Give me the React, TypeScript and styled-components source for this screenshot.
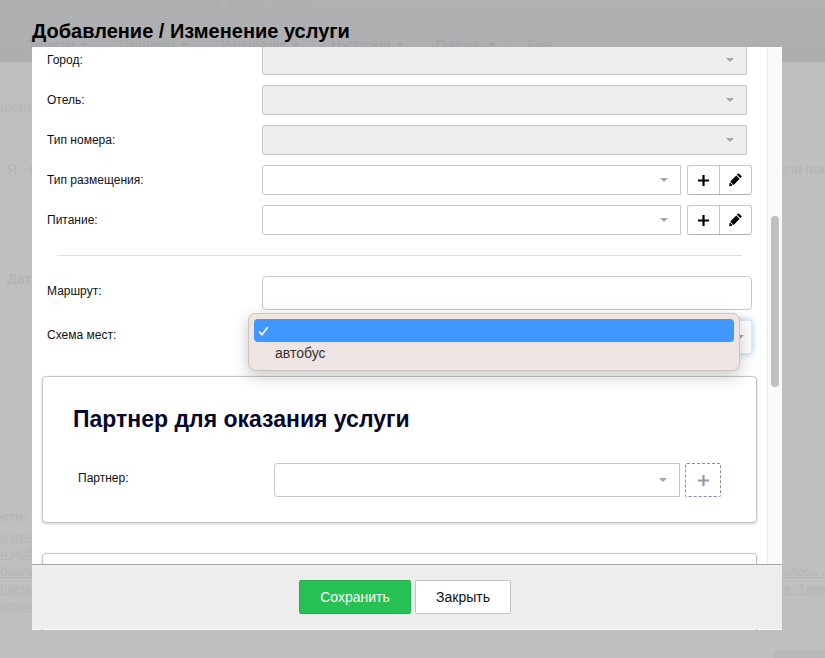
import React from "react";
import styled, { createGlobalStyle } from "styled-components";

const Global = createGlobalStyle`
  html, body { margin: 0; padding: 0; height: 100%; }
  body { font-family: "Liberation Sans", Arial, sans-serif; background: #bfbfbf; overflow: hidden; }
`;

const Page = styled.div`
  position: relative;
  width: 825px;
  height: 658px;
  overflow: hidden;
  background: #bfbfbf;
`;

/* ---- dimmed page behind the dialog ---- */
const TopBar = styled.div`
  height: 62px;
  background: linear-gradient(#b0b1b3, #adaeb0);
  box-sizing: border-box;
`;
const Tabs = styled.div`
  display: flex;
  gap: 7px;
  height: 12px;
  margin-bottom: 26px;
`;
const Tab = styled.div<{ $w: number }>`
  width: ${(p) => p.$w}px;
  background: #aeafb1;
  border-radius: 0 0 3px 3px;
`;
const Nav = styled.div`
  display: flex;
  gap: 31.5px;
  padding-left: 28px;
  font-size: 12px;
  color: #a3a4a6;
`;
const NavItem = styled.span`
  display: inline-flex;
  align-items: center;
  gap: 6px;
  white-space: nowrap;
  &::after {
    content: "";
    display: ${(p: { $plain?: boolean }) => (p.$plain ? "none" : "block")};
    border: 4px solid transparent;
    border-top: 4px solid #a3a4a6;
    border-bottom: 0;
  }
`;
const DimBand = styled.div<{ $h: number; $pl?: number; $pb?: number; $align?: string }>`
  height: ${(p) => p.$h}px;
  box-sizing: border-box;
  display: flex;
  align-items: ${(p) => p.$align ?? "center"};
  justify-content: space-between;
  padding-left: ${(p) => p.$pl ?? 7}px;
  padding-bottom: ${(p) => p.$pb ?? 0}px;
  border-bottom: 1px solid #bbbbbb;
  font-size: 14px;
  color: #b5b5b5;
  white-space: nowrap;
`;
const DimTail = styled.span`
  margin-right: -25px;
`;
const DimNotes = styled.div`
  margin-top: 160px;
  font-size: 13px;
  line-height: 17.2px;
  color: #b6b6b6;
  white-space: nowrap;
`;
const DimHead = styled.div`
  margin: 0 0 3px -6px;
  font-weight: 700;
`;
const DimLink = styled.div`
  display: flex;
  justify-content: space-between;
  text-decoration: underline;
`;
const DimLinkTail = styled.span<{ $over?: number }>`
  margin-right: -${(p) => p.$over ?? 0}px;
`;
const Corner = styled.div`
  position: absolute;
  right: 0;
  bottom: 0;
  width: 52px;
  height: 8px;
  background: #b9b9b9;
  border-radius: 8px 0 0 0;
`;

/* ---- dialog ---- */
const Dialog = styled.div`
  position: absolute;
  left: 32px;
  top: 18px;
  width: 750px;
`;
const DialogTitle = styled.h2`
  margin: 0;
  height: 29px;
  line-height: 27px;
  font-size: 20px;
  font-weight: 700;
  color: #000;
  white-space: nowrap;
`;
const DialogBody = styled.div`
  position: relative;
  height: 583px;
  background: #fff;
  overflow: hidden;
  display: flex;
`;
const Content = styled.div`
  width: 735px;
  flex: none;
  box-sizing: border-box;
  padding: 0 10px;
  margin-top: -2px;
`;
const Track = styled.div`
  position: relative;
  flex: none;
  width: 15px;
  background: #fafafa;
  border-left: 1px solid #e8e8e8;
  box-sizing: border-box;
`;
const Thumb = styled.div`
  position: absolute;
  left: 3px;
  top: 169px;
  width: 8px;
  height: 171px;
  border-radius: 4px;
  background: #c1c1c1;
`;
const Row = styled.div<{ $h?: number; $mb?: number }>`
  display: flex;
  align-items: center;
  height: ${(p) => p.$h ?? 30}px;
  margin-bottom: ${(p) => p.$mb ?? 10}px;
`;
const Label = styled.label<{ $w?: number; $pl?: number; $raise?: number }>`
  flex: none;
  width: ${(p) => p.$w ?? 220}px;
  padding-left: ${(p) => p.$pl ?? 5}px;
  padding-bottom: ${(p) => p.$raise ?? 0}px;
  box-sizing: border-box;
  font-size: 12px;
  color: #111;
  white-space: nowrap;
`;
const Select = styled.div<{ $w: number; $h?: number; $disabled?: boolean }>`
  position: relative;
  flex: none;
  width: ${(p) => p.$w}px;
  height: ${(p) => p.$h ?? 30}px;
  box-sizing: border-box;
  border: 1px solid #c8c8c8;
  border-radius: 3px 0 0 3px;
  background: ${(p) => (p.$disabled ? "#eeeeee" : "#fff")};
  &::after {
    content: "";
    position: absolute;
    right: 12px;
    top: 50%;
    margin-top: -2px;
    border: 4.5px solid transparent;
    border-top: 4px solid #a6a6a6;
    border-bottom: 0;
  }
`;
const FocusSelect = styled(Select)`
  border-color: #dbe8f5;
  box-shadow: 0 0 6px rgba(82, 168, 236, 0.6);
  border-radius: 3px;
  &::after {
    right: 7px;
  }
`;
const TextInput = styled.div`
  flex: none;
  width: 490px;
  height: 34px;
  box-sizing: border-box;
  border: 1px solid #c8c8c8;
  border-radius: 4px;
  background: #fff;
`;
const BtnGroup = styled.div`
  flex: none;
  display: flex;
  margin-left: 6px;
  height: 30px;
  box-sizing: border-box;
  border: 1px solid #c8c8c8;
  border-bottom-color: #b4b4b4;
  border-radius: 3px;
`;
const IconBtn = styled.div`
  width: 31px;
  padding-right: 1px;
  box-sizing: border-box;
  display: flex;
  align-items: center;
  justify-content: center;
  & + & {
    width: 32px;
    padding-right: 0;
    border-left: 1px solid #c8c8c8;
  }
`;
const Divider = styled.hr`
  margin: 20px 15px 20px 15px;
  border: 0;
  border-top: 1px solid #dedede;
`;
const Card = styled.section<{ $h: number; $mb?: number }>`
  width: 715px;
  height: ${(p) => p.$h}px;
  margin-bottom: ${(p) => p.$mb ?? 0}px;
  box-sizing: border-box;
  border: 1px solid #c6c6c6;
  border-radius: 4px;
  background: #fff;
  box-shadow: 0 1px 3px rgba(0, 0, 0, 0.2);
  padding: 29px 30px 0;
`;
const CardTitle = styled.h3`
  margin: 0 0 30px;
  font-size: 23px;
  line-height: 27px;
  font-weight: 700;
  color: #07072b;
  white-space: nowrap;
`;
const DashedBtn = styled.div`
  flex: none;
  margin-left: 5px;
  width: 36px;
  height: 34px;
  box-sizing: border-box;
  border: 1px dashed #8f88a8;
  border-radius: 2px;
  display: flex;
  align-items: center;
  justify-content: center;
`;

/* ---- native-style popup ---- */
const Popup = styled.div`
  position: absolute;
  left: 216px;
  top: 266px;
  width: 492px;
  height: 58px;
  box-sizing: border-box;
  padding: 5px;
  background: #eee5e3;
  border: 1px solid #cbc5c3;
  border-radius: 7px;
  box-shadow: 0 5px 16px rgba(0, 0, 0, 0.22);
  font-size: 14px;
  color: #333;
`;
const PopupActive = styled.div`
  height: 23px;
  border-radius: 4px;
  background: #3f97ff;
  display: flex;
  align-items: center;
  padding-left: 4px;
`;
const PopupItem = styled.div`
  height: 22px;
  line-height: 22px;
  padding-left: 21px;
`;

/* ---- footer ---- */
const Footer = styled.div`
  position: absolute;
  left: 0;
  right: 0;
  bottom: 1px;
  height: 65px;
  box-sizing: border-box;
  background: #ededed;
  border-top: 1px solid #a8a8a8;
  display: flex;
  justify-content: center;
  gap: 4px;
  padding: 15px 4px 0 0;
`;
const Button = styled.button<{ $primary?: boolean }>`
  height: 34px;
  width: ${(p) => (p.$primary ? 112 : 96)}px;
  box-sizing: border-box;
  border-radius: 2px;
  border: 1px solid ${(p) => (p.$primary ? "#22b24c" : "#c4c4c4")};
  background: ${(p) => (p.$primary ? "#27c055" : "#fff")};
  color: ${(p) => (p.$primary ? "#fff" : "#111")};
  font-family: inherit;
  font-size: 14px;
  padding: 0;
`;

const Plus = ({ color = "#000", size = 11 }: { color?: string; size?: number }) => (
  <svg width={size} height={size} viewBox="0 0 11 11" aria-hidden="true">
    <path d="M4.4 0h2.2v4.4H11v2.2H6.6V11H4.4V6.6H0V4.4h4.4z" fill={color} />
  </svg>
);
const Pencil = () => (
  <svg width="13" height="14" viewBox="0 0 13 14" aria-hidden="true">
    <path d="M10 .6 12.4 3c.3.3.3.7 0 1L11.3 5.1 7.9 1.7 9 .6c.3-.3.7-.3 1 0zM7.2 2.4l3.4 3.4-5.9 6.1-3.4-3.4zM.8 9.3l3 3-3.6 1.1z" fill="#000" />
  </svg>
);
const Check = () => (
  <svg width="11" height="10" viewBox="0 0 11 10" aria-hidden="true">
    <path d="M1 5.5 4 8.7 9.8 1" fill="none" stroke="#fff" strokeWidth="1.7" />
  </svg>
);

const SelectRow = ({ label, disabled }: { label: string; disabled?: boolean }) => (
  <Row>
    <Label>{label}</Label>
    {disabled ? (
      <Select $w={485} $disabled />
    ) : (
      <>
        <Select $w={419} />
        <BtnGroup>
          <IconBtn><Plus /></IconBtn>
          <IconBtn><Pencil /></IconBtn>
        </BtnGroup>
      </>
    )}
  </Row>
);

export default function App() {
  return (
    <Page>
      <Global />
      <TopBar>
        <Tabs>
          <Tab $w={175} />
          <Tab $w={38} />
          <Tab $w={38} />
          <Tab $w={40} />
        </Tabs>
        <Nav>
          <NavItem>Туристы</NavItem>
          <NavItem>Партнеры</NavItem>
          <NavItem>Интеграции</NavItem>
          <NavItem>Настройки</NavItem>
          <NavItem>Помощь</NavItem>
          <NavItem $plain>Еще ...</NavItem>
        </Nav>
      </TopBar>
      <DimBand $h={60} $pl={0} $pb={6} $align="flex-end">щения</DimBand>
      <DimBand $h={31} />
      <DimBand $h={33}>
        <span>Я - м</span>
        <DimTail>для поиска</DimTail>
      </DimBand>
      <DimBand $h={110} $pb={8} $align="flex-end"><b>Дата</b></DimBand>
      <DimBand $h={52} />
      <DimNotes>
        <DimHead>ости:</DimHead>
        <DimLink><span>и ручн</span></DimLink>
        <DimLink><span>и доб</span></DimLink>
        <DimLink><span>бавле</span><DimLinkTail>удалось .</DimLinkTail></DimLink>
        <DimLink><span>hatsap</span><DimLinkTail $over={9}>я. Также</DimLinkTail></DimLink>
        <DimLink><span>возмо</span></DimLink>
      </DimNotes>
      <Corner />

      <Dialog>
        <DialogTitle>Добавление / Изменение услуги</DialogTitle>
        <DialogBody>
          <Content>
            <SelectRow label="Город:" disabled />
            <SelectRow label="Отель:" disabled />
            <SelectRow label="Тип номера:" disabled />
            <SelectRow label="Тип размещения:" />
            <SelectRow label="Питание:" />
            <Divider />
            <Row $h={34} $mb={10}>
              <Label $raise={4}>Маршрут:</Label>
              <TextInput />
            </Row>
            <Row $h={34} $mb={22}>
              <Label $raise={4}>Схема мест:</Label>
              <FocusSelect $w={490} $h={34} />
            </Row>
            <Card $h={147} $mb={30}>
              <CardTitle>Партнер для оказания услуги</CardTitle>
              <Row $h={34} $mb={0}>
                <Label $w={201} $pl={5} $raise={4}>Партнер:</Label>
                <Select $w={406} $h={34} />
                <DashedBtn><Plus color="#9a94ad" /></DashedBtn>
              </Row>
            </Card>
            <Card $h={146} />
          </Content>
          <Track><Thumb /></Track>
          <Popup>
            <PopupActive><Check /></PopupActive>
            <PopupItem>автобус</PopupItem>
          </Popup>
          <Footer>
            <Button $primary>Сохранить</Button>
            <Button>Закрыть</Button>
          </Footer>
        </DialogBody>
      </Dialog>
    </Page>
  );
}
